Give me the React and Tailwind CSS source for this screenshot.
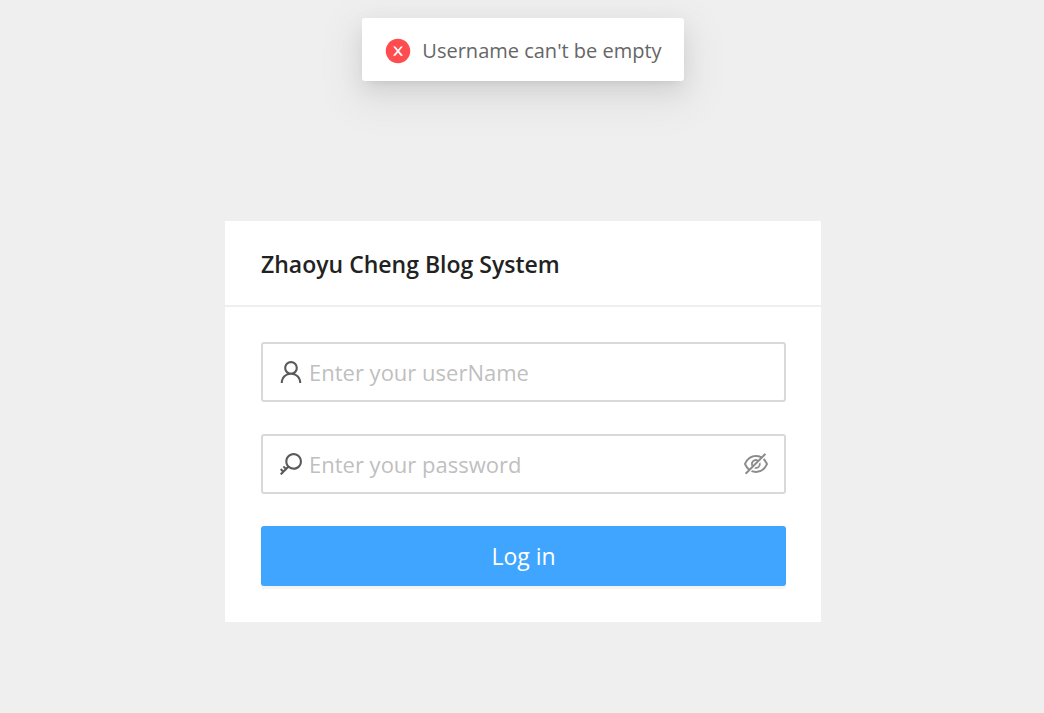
import { useState } from "react";
import { AiOutlineEye, AiOutlineEyeInvisible, AiOutlineUser } from "react-icons/ai";

function ErrorIcon() {
  return (
    <svg
      aria-hidden="true"
      viewBox="0 0 1024 1024"
      fill="currentColor"
      className="size-7 shrink-0 text-[#ff4d4f]"
    >
      <path d="M512 64C264.6 64 64 264.6 64 512s200.6 448 448 448 448-200.6 448-448S759.4 64 512 64zm165.4 618.2l-66-.3L512 563.4l-99.3 118.4-66.1.3c-4.4 0-8-3.5-8-8 0-1.9.7-3.7 1.9-5.2l130.1-155L340.5 359a8.32 8.32 0 0 1-1.9-5.2c0-4.4 3.6-8 8-8l66.1.3L512 464.6l99.3-118.4 66-.3c4.4 0 8 3.5 8 8 0 1.9-.7 3.7-1.9 5.2L553.5 514l130 155c1.2 1.5 1.9 3.3 1.9 5.2 0 4.4-3.6 8-8 8z" />
    </svg>
  );
}

function KeyIcon(props) {
  return (
    <svg viewBox="0 0 1024 1024" fill="currentColor" {...props}>
      <path d="M608 112c-167.9 0-304 136.1-304 304 0 70.3 23.9 135 63.9 186.5l-41.1 41.1-62.3-62.3a8.15 8.15 0 0 0-11.4 0l-39.8 39.8a8.15 8.15 0 0 0 0 11.4l62.3 62.3-44.9 44.9-62.3-62.3a8.15 8.15 0 0 0-11.4 0l-39.8 39.8a8.15 8.15 0 0 0 0 11.4l62.3 62.3-65.3 65.3a8.03 8.03 0 0 0 0 11.3l42.3 42.3c3.1 3.1 8.2 3.1 11.3 0l253.6-253.6A304.06 304.06 0 0 0 608 720c167.9 0 304-136.1 304-304S775.9 112 608 112zm161.2 465.2C726.2 620.3 668.9 644 608 644c-60.9 0-118.2-23.7-161.2-66.8-43.1-43-66.8-100.3-66.8-161.2 0-60.9 23.7-118.2 66.8-161.2 43-43.1 100.3-66.8 161.2-66.8 60.9 0 118.2 23.7 161.2 66.8 43.1 43 66.8 100.3 66.8 161.2 0 60.9-23.7 118.2-66.8 161.2z" />
    </svg>
  );
}

function Toast({ children }) {
  return (
    <div className="pointer-events-none absolute inset-x-0 top-[18px] flex justify-center pl-0.5">
      <div
        role="alert"
        className="flex h-[63px] items-center gap-2.5 rounded-[3px] bg-white px-[22px] pt-0.5 text-xl text-[#666] shadow-[0_5px_9px_-6px_rgba(0,0,0,0.12),0_9px_24px_0_rgba(0,0,0,0.08),0_14px_42px_12px_rgba(0,0,0,0.05)]"
      >
        <ErrorIcon />
        <span>{children}</span>
      </div>
    </div>
  );
}

function Field({ icon: Icon, label, suffix, ...inputProps }) {
  return (
    <label className="flex h-15 items-center gap-1 rounded-[3px] border-2 border-[#d9d9d9] px-3.5 focus-within:border-[#40a9ff]">
      <Icon aria-hidden="true" className="size-7 shrink-0 text-[#595959]" />
      <input
        aria-label={label}
        placeholder={label}
        className="min-w-0 flex-1 bg-transparent text-[22px] text-[#262626] outline-none placeholder:text-[#bfbfbf]"
        {...inputProps}
      />
      {suffix}
    </label>
  );
}

export default function App() {
  const [visible, setVisible] = useState(false);
  const EyeIcon = visible ? AiOutlineEye : AiOutlineEyeInvisible;

  return (
    <div className="relative min-h-screen bg-[#efefef] pt-[221px] pb-12 pl-0.5 font-['Open_Sans','Noto_Sans',sans-serif]">
      <Toast>Username can't be empty</Toast>
      <main className="mx-auto w-full max-w-[596px] bg-white">
        <header className="flex h-[86px] items-center border-b-2 border-[#efefef] px-9 pt-0.5">
          <h1 className="text-[23px] font-semibold text-[#222]">Zhaoyu Cheng Blog System</h1>
        </header>
        <form
          className="flex flex-col gap-8 pt-[35px] pr-[35px] pb-9 pl-9"
          onSubmit={(event) => event.preventDefault()}
        >
          <Field icon={AiOutlineUser} label="Enter your userName" type="text" name="username" />
          <Field
            icon={KeyIcon}
            label="Enter your password"
            type={visible ? "text" : "password"}
            name="password"
            suffix={
              <button
                type="button"
                aria-label={visible ? "Hide password" : "Show password"}
                onClick={() => setVisible(!visible)}
                className="shrink-0 text-[#8c8c8c]"
              >
                <EyeIcon aria-hidden="true" className="size-7" />
              </button>
            }
          />
          <button
            type="submit"
            className="h-15 rounded-[3px] bg-[#40a5ff] text-[23px] text-white shadow-[0_3px_0_rgba(0,0,0,0.045)]"
          >
            Log in
          </button>
        </form>
      </main>
    </div>
  );
}
